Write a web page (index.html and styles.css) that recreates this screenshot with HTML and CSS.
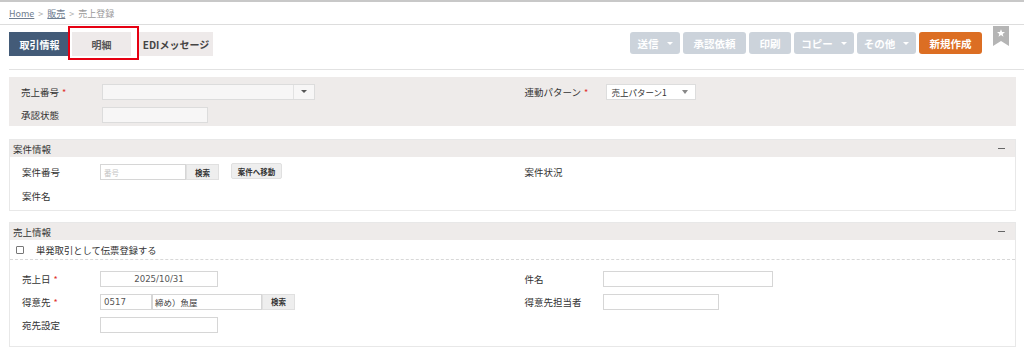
FILE: index.html
```html
<!DOCTYPE html>
<html lang="ja">
<head>
<meta charset="utf-8">
<title>売上登録</title>
<link rel="stylesheet" href="styles.css">
</head>
<body>
<div class="topline"></div>
<div class="breadcrumb"><a href="#">Home</a><span class="sep">&gt;</span><a href="#">販売</a><span class="sep">&gt;</span><span class="cur">売上登録</span></div>
<div class="toolbar">
  <div class="tabs">
    <div class="tab tab-active">取引情報</div>
    <div class="mark"><div class="tab tab-plain tab-mid">明細</div></div>
    <div class="tab tab-plain tab-edi">EDIメッセージ</div>
  </div>
  <div class="actions">
    <button class="btn w50">送信<span class="caret"></span></button>
    <button class="btn w63">承認依頼</button>
    <button class="btn w42">印刷</button>
    <button class="btn w60">コピー<span class="caret"></span></button>
    <button class="btn w59">その他<span class="caret"></span></button>
    <button class="btn btn-primary w63">新規作成</button>
    <svg class="bookmark" width="16" height="20" viewBox="0 0 16 20"><polygon points="0,0 16,0 16,20 8,15 0,20" fill="#b5b5b5"/><polygon points="8,3.2 9.1,6 12,6.1 9.7,7.9 10.5,10.7 8,9.1 5.5,10.7 6.3,7.9 4,6.1 6.9,6" fill="#fff"/></svg>
  </div>
</div>

<div class="page">
  <div class="panel-top">
    <div class="col">
      <div class="row"><span class="label l1">売上番号<i class="req">*</i></span><span class="select-wide"><span class="sel-body"></span><span class="sel-btn"><span class="dcaret"></span></span></span></div>
      <div class="row"><span class="label l1">承認状態</span><span class="input grey w106"></span></div>
    </div>
    <div class="col">
      <div class="row"><span class="label l1">連動パターン<i class="req">*</i></span><span class="select-small"><span class="sel-text">売上パターン1</span><span class="tcaret"></span></span></div>
    </div>
  </div>

  <div class="section s2">
    <div class="sec-head"><span>案件情報</span><span class="minus"></span></div>
    <div class="sec-body b2">
      <div class="col">
        <div class="row r24"><span class="label">案件番号</span><span class="input w86 ph">番号</span><span class="sbtn w33">検索</span><span class="sbtn move">案件へ移動</span></div>
        <div class="row r24"><span class="label">案件名</span></div>
      </div>
      <div class="col">
        <div class="row r24"><span class="label">案件状況</span></div>
      </div>
    </div>
  </div>

  <div class="section s3">
    <div class="sec-head"><span>売上情報</span><span class="minus"></span></div>
    <div class="sec-body b3">
      <div class="check-row"><span class="cbox"></span><span class="check-label">単発取引として伝票登録する</span></div>
      <div class="grid3">
        <div class="col">
          <div class="row"><span class="label">売上日<i class="req">*</i></span><span class="input w118 center num">2025/10/31</span></div>
          <div class="row"><span class="label">得意先<i class="req">*</i></span><span class="input w52 num">0517</span><span class="input w110 cjk">締め）魚屋</span><span class="sbtn w33">検索</span></div>
          <div class="row"><span class="label">宛先設定</span><span class="input w118"></span></div>
        </div>
        <div class="col">
          <div class="row"><span class="label">件名</span><span class="input w170"></span></div>
          <div class="row"><span class="label">得意先担当者</span><span class="input w116"></span></div>
        </div>
      </div>
    </div>
  </div>
</div>
</body>
</html>
```

FILE: styles.css
```css
* { box-sizing: border-box; }
body {
  margin: 0;
  font-family: "Noto Sans CJK JP", "Noto Sans", sans-serif;
  color: #333;
  background: #fff;
  font-size: 10px;
}
.topline { height: 2px; background: #c8c8c8; }
.breadcrumb {
  height: 23px;
  padding: 0 9px;
  display: flex;
  align-items: center;
  font-size: 9px;
  color: #999;
  border-bottom: 1px solid #ddd;
}
.breadcrumb a { color: #6f7d8f; text-decoration: underline; }
.breadcrumb .sep { margin: 0 4px; color: #aaa; }
.breadcrumb .cur { color: #9a9a9a; }

.toolbar {
  margin-left: 9px;
  height: 45px;
  border-bottom: 1px solid #e2e2e2;
  display: flex;
  justify-content: space-between;
  align-items: flex-start;
  padding-right: 15px;
}
.tabs { display: flex; align-items: flex-start; }
.tab {
  height: 24px;
  display: flex;
  align-items: center;
  justify-content: center;
  font-weight: bold;
  font-size: 10px;
}
.tab-active { width: 61px; background: #435b78; color: #fff; margin-top: 7px; }
.tab-plain { background: #eeeaea; color: #555; }
.tab-mid { width: 59px; }
.tab-edi { width: 74px; margin-top: 7px; color: #444; }
.mark {
  margin-left: -2px;
  margin-top: 1px;
  border: 2px solid #e60012;
  padding: 4px 6px 2px 2px;
}

.actions { display: flex; align-items: flex-start; gap: 3px; }
.btn {
  margin-top: 7px;
  height: 22px;
  border: none;
  border-radius: 3px;
  background: #ccd3db;
  color: #fff;
  font-family: inherit;
  font-weight: bold;
  font-size: 10.5px;
  display: flex;
  align-items: center;
  justify-content: center;
  padding: 0;
}
.btn-primary { background: #dc6e23; }
.caret {
  display: inline-block;
  margin-left: 8px;
  border-left: 3px solid transparent;
  border-right: 3px solid transparent;
  border-top: 3px solid #fff;
}
.w50 { width: 50px; }
.w63 { width: 63px; }
.w42 { width: 42px; }
.w60 { width: 60px; }
.w59 { width: 59px; }
.bookmark { margin-left: 8px; margin-top: 1px; }

.page { padding: 7px 8px 0 9px; }

.panel-top {
  background: #eeebea;
  height: 49px;
  padding-top: 3px;
  display: grid;
  grid-template-columns: 1fr 1fr;
}
.col { padding-left: 12px; }
.row { height: 23px; display: flex; align-items: center; }
.r24 { height: 24px; }
.label { width: 78px; flex: none; font-size: 9.5px; color: #333; }
.l1 { width: 81px; }
.req { font-style: normal; color: #e0302a; margin-left: 3px; font-size: 9px; }

.select-wide {
  width: 213px;
  height: 16px;
  display: flex;
  border: 1px solid #dcdcdc;
  background: #f7f6f6;
}
.sel-body { flex: 1; }
.sel-btn {
  width: 21px;
  border-left: 1px solid #e2e2e2;
  display: flex;
  align-items: center;
  justify-content: center;
}
.dcaret {
  border-left: 3px solid transparent;
  border-right: 3px solid transparent;
  border-top: 3px solid #555;
}
.select-small {
  width: 90px;
  height: 16px;
  background: #fff;
  border: 1px solid #ddd;
  display: flex;
  align-items: center;
  justify-content: space-between;
  padding: 0 7px 0 5px;
  font-size: 8.5px;
  color: #333;
}
.tcaret {
  border-left: 3px solid transparent;
  border-right: 3px solid transparent;
  border-top: 4px solid #888;
}

.input {
  height: 16px;
  border: 1px solid #d6d6d6;
  background: #fff;
  display: flex;
  align-items: center;
  padding: 0 3px;
  flex: none;
}
.grey { background: #f7f6f6; border-color: #dcdcdc; }
.w106 { width: 106px; }
.w86 { width: 86px; }
.w118 { width: 118px; }
.w52 { width: 52px; }
.w110 { width: 110px; }
.w170 { width: 170px; }
.w116 { width: 116px; }
.ph { color: #c5c5c5; font-size: 7.5px; }
.center { justify-content: center; }
.num { font-family: "DejaVu Sans", sans-serif; font-size: 8.6px; color: #555; }
.cjk { font-size: 8.5px; color: #444; padding-left: 2px; }

.sbtn {
  height: 16px;
  background: #eeeeee;
  border: 1px solid #e0e0e0;
  display: flex;
  align-items: center;
  justify-content: center;
  font-size: 7.5px;
  font-weight: bold;
  color: #333;
  flex: none;
}
.w33 { width: 33px; }
.move { width: 51px; margin-left: 12px; margin-top: -2px; border-radius: 2px; }

.section { border: 1px solid #e8e8e8; }
.s2 { margin-top: 13px; }
.s3 { margin-top: 11px; }
.sec-head {
  height: 17px;
  background: #eeebea;
  display: flex;
  align-items: center;
  justify-content: space-between;
  padding: 0 10px 0 3px;
  font-size: 9.5px;
  color: #333;
}
.minus { width: 7px; height: 1px; background: #666; }
.sec-body { background: #fff; }
.b2 {
  display: grid;
  grid-template-columns: 1fr 1fr;
  padding: 3px 0 2px;
}
.b3 { padding-bottom: 10px; }
.check-row {
  height: 20px;
  display: flex;
  align-items: center;
  padding-left: 6px;
  border-bottom: 1px dashed #d8d8d8;
}
.cbox {
  width: 8px;
  height: 8px;
  border: 1px solid #777;
  border-radius: 1px;
  margin-right: 12px;
}
.check-label { font-size: 9.3px; color: #333; }
.grid3 {
  display: grid;
  grid-template-columns: 1fr 1fr;
  padding-top: 7px;
}
```
